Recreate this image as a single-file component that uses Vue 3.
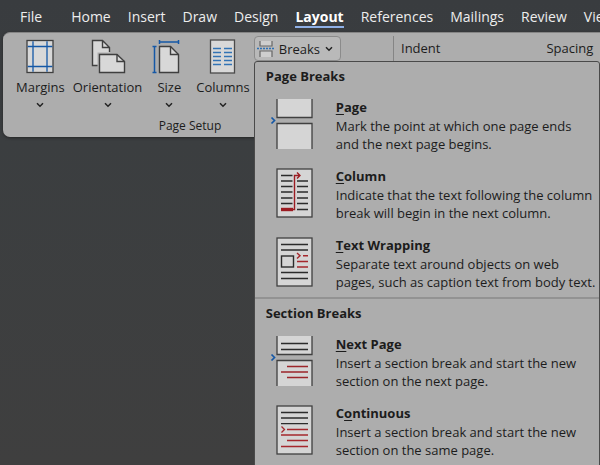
<script setup>
const tabs = ['File', 'Home', 'Insert', 'Draw', 'Design', 'Layout', 'References', 'Mailings', 'Review', 'View']
const active = 'Layout'
const tools = ['Margins', 'Orientation', 'Size', 'Columns']
const sections = [
  {
    title: 'Page Breaks',
    items: [
      { id: 'page', pre: '', key: 'P', rest: 'age', lines: ['Mark the point at which one page ends', 'and the next page begins.'] },
      { id: 'column', pre: '', key: 'C', rest: 'olumn', lines: ['Indicate that the text following the column', 'break will begin in the next column.'] },
      { id: 'wrap', pre: '', key: 'T', rest: 'ext Wrapping', lines: ['Separate text around objects on web', 'pages, such as caption text from body text.'] }
    ]
  },
  {
    title: 'Section Breaks',
    items: [
      { id: 'next', pre: '', key: 'N', rest: 'ext Page', lines: ['Insert a section break and start the new', 'section on the next page.'] },
      { id: 'continuous', pre: 'C', key: 'o', rest: 'ntinuous', lines: ['Insert a section break and start the new', 'section on the same page.'] }
    ]
  }
]
</script>

<template>
  <div class="app">
    <nav class="tabs">
      <a v-for="t in tabs" :key="t" href="#" class="tab" :class="{ active: t === active, file: t === 'File' }">{{ t }}</a>
    </nav>

    <main class="ribbon">
      <section class="group">
        <div class="row">
          <button v-for="t in tools" :key="t" type="button" class="tool" :class="t.toLowerCase()">
            <svg v-if="t === 'Margins'" class="tool-icon" width="38" height="36" viewBox="0 0 38 36">
              <rect x="6" y="2.500" width="26" height="32" fill="#d8d8d8" stroke="#3f3f3f" stroke-width="1.300" />
              <path d="M12 3.200V33.800M26 3.200V33.800M6.700 8.500H31.300M6.700 28.500H31.300" stroke="#1558a6" stroke-width="1.300" />
            </svg>
            <svg v-else-if="t === 'Orientation'" class="tool-icon" width="38" height="36" viewBox="0 0 38 36">
              <path d="M3.500 2.500H13.500L20.500 9.500V27.500H3.500Z" fill="#d8d8d8" />
              <path d="M9 27.500H3.500V2.500H13.500L20.500 9.500V14M13.500 2.500V9.500H20.500" fill="none" stroke="#3f3f3f" stroke-width="1.400" />
              <path d="M8.500 14.500H28L37 22V36H8.500Z" fill="#adadad" />
              <path d="M10.500 16.500H28L35.500 23.500V34.500H10.500Z" fill="#d8d8d8" stroke="#3f3f3f" stroke-width="1.400" />
              <path d="M28 16.500V23.500H35.500" fill="none" stroke="#3f3f3f" stroke-width="1.400" />
            </svg>
            <svg v-else-if="t === 'Size'" class="tool-icon" width="38" height="36" viewBox="0 0 38 36">
              <path d="M9.500 8.500H20.500L28.500 16.500V34.500H9.500Z" fill="#d8d8d8" stroke="#3f3f3f" stroke-width="1.400" />
              <path d="M20.500 8.500V16.500H28.500" fill="none" stroke="#3f3f3f" stroke-width="1.400" />
              <path d="M9 4H29M9.500 2V6M28.500 2V6M4.500 8.500V34.500M2.500 8.500H6.500M2.500 34.500H6.500" stroke="#1558a6" stroke-width="1.500" />
            </svg>
            <svg v-else class="tool-icon" width="38" height="36" viewBox="0 0 38 36">
              <rect x="6.500" y="2" width="24" height="33" fill="#d8d8d8" stroke="#4b4b4b" stroke-width="1.300" />
              <path d="M9 10.500H17M9 14.500H17M9 18.500H17M9 22.500H17M9 26.500H17M20 10.500H28M20 14.500H28M20 18.500H28M20 22.500H28M20 26.500H28" stroke="#3273b5" stroke-width="1.300" />
            </svg>
            <span>{{ t }}</span>
            <svg class="chevron" width="8" height="6" viewBox="0 0 8 6"><path d="M1 1.300L4 4.300L7 1.300" /></svg>
          </button>

          <div class="breaks-wrap">
            <button type="button" class="breaks" aria-haspopup="menu" aria-expanded="true">
              <svg width="20" height="20" viewBox="0 0 20 20">
                <path d="M4 2H16V7H4ZM4 12H16V18H4Z" fill="#cecece" />
                <path d="M4 2V7H16V2M4 18V12H16V18" fill="none" stroke="#666" stroke-width="1.200" />
                <path d="M1 9.500H19" stroke="#2d71b6" stroke-width="1.400" stroke-dasharray="2 1" />
              </svg>
              <span>Breaks</span>
              <svg class="chevron" width="8" height="6" viewBox="0 0 8 6"><path d="M1 1.300L4 4.300L7 1.300" /></svg>
            </button>

            <div class="menu" role="menu">
              <section v-for="s in sections" :key="s.title" class="menu-section">
                <h2>{{ s.title }}</h2>
                <button v-for="i in s.items" :key="i.id" type="button" role="menuitem" class="item">
                  <svg class="item-icon" width="44" height="50" viewBox="0 0 44 50">
                    <g v-if="i.id === 'page'">
                      <path d="M8 0H43V18.500H8ZM8 24.500H43V50H8Z" fill="#d5d5d5" />
                      <path d="M8 0V18.500H43V0M8 50V24.500H43V50" fill="none" stroke="#404040" stroke-width="1.300" />
                      <path d="M2.500 18.500L5.500 21.500L2.500 24.500" fill="none" stroke="#1558a6" stroke-width="1.700" />
                    </g>
                    <g v-else-if="i.id === 'next'">
                      <path d="M8 0H43V18.500H8ZM8 24.500H43V50H8Z" fill="#d5d5d5" />
                      <path d="M8 0V18.500H43V0M8 50V24.500H43V50" fill="none" stroke="#404040" stroke-width="1.300" />
                      <path d="M12 7.500H39M12 13.500H39" stroke="#2b2b2b" stroke-width="1.300" />
                      <path d="M18 30.500H39M12 36H39M18 41.500H39" stroke="#9c252a" stroke-width="1.300" />
                      <path d="M2.500 18.500L5.500 21.500L2.500 24.500" fill="none" stroke="#1558a6" stroke-width="1.700" />
                    </g>
                    <g v-else>
                      <rect x="8" y="1" width="35" height="48" fill="#d5d5d5" stroke="#404040" stroke-width="1.300" />
                      <g v-if="i.id === 'column'">
                        <path d="M12 7.500H23.500M12 13H23.500M12 18.500H23.500M12 24H23.500M12 30H23.500M12 35.500H23.500M28 13H39M28 18.500H39M28 24H39M28 30H39M28 35.500H39M28 41.500H39" stroke="#2b2b2b" stroke-width="1.300" />
                        <path d="M12 41.500H24" stroke="#9c1c22" stroke-width="3.400" />
                        <path d="M24 41.500H25.500V7.500H31M28 4.500L31 7.500L28 10.500" fill="none" stroke="#9c1c22" stroke-width="1.400" />
                      </g>
                      <g v-else-if="i.id === 'wrap'">
                        <path d="M12 7.500H39M12 13H39M12 35.500H39M12 41.500H39" stroke="#2b2b2b" stroke-width="1.300" />
                        <rect x="12.500" y="19" width="12" height="11" fill="none" stroke="#2b2b2b" stroke-width="1.400" />
                        <path d="M28 16L31 18.700L28 21.500M34 18.700H39M28 24.500H39M28 30H39" fill="none" stroke="#a5272c" stroke-width="1.400" />
                      </g>
                      <g v-else>
                        <path d="M12 7.500H39M12 13H39M12 18.700H39" stroke="#2b2b2b" stroke-width="1.300" />
                        <path d="M12.500 21.500L15.500 24.500L12.500 27.500M18 24.500H39M12 30H39M18 35.500H39M12 41.500H39" fill="none" stroke="#a5272c" stroke-width="1.300" />
                      </g>
                    </g>
                  </svg>
                  <span class="item-text">
                    <strong>{{ i.pre }}<u>{{ i.key }}</u>{{ i.rest }}</strong>
                    <span v-for="l in i.lines" :key="l" class="line">{{ l }}</span>
                  </span>
                </button>
              </section>
            </div>
          </div>
        </div>
        <div class="caption">Page Setup</div>
      </section>

      <section class="paragraph">
        <span>Indent</span>
        <span>Spacing</span>
      </section>
    </main>
  </div>
</template>

<style>
body {
  margin: 0;
  background: #3d3f3f;
}
</style>

<style scoped>
.app {
  min-height: 100vh;
  overflow: hidden;
  position: relative;
  background: linear-gradient(#393c3f 0, #3b3e40 140px, #3f3f3f 100%);
  font-family: "Open Sans", "Noto Sans", sans-serif;
  font-size: 13px;
  color: #1c1c1c;
}
button {
  font: inherit;
  color: inherit;
  background: none;
  border: 0;
  padding: 0;
  margin: 0;
}
.tabs {
  display: flex;
  gap: 17px;
  height: 32px;
  padding-left: 20px;
  font-size: 14px;
}
.tab {
  flex: none;
  height: 19px;
  margin-top: 7px;
  line-height: 20px;
  color: #ededed;
  text-decoration: none;
}
.file {
  margin-right: 12px;
}
.active {
  font-weight: 700;
  color: #fff;
  border-bottom: 2px solid #8fb0e6;
}
.ribbon {
  display: flex;
  height: 105px;
  margin-left: 3px;
  box-sizing: border-box;
  border-top: 1px solid #858585;
  border-radius: 7px 0 0 7px;
  background: #adadad;
  box-shadow: 0 1px 3px #252525;
}
.group {
  flex: none;
  width: 374px;
}
.row {
  display: flex;
  height: 84px;
  padding-left: 13px;
}
.tool {
  display: flex;
  flex-direction: column;
  align-items: center;
  padding-top: 5px;
  line-height: 20px;
}
.tool-icon {
  margin-bottom: 3px;
}
.tool .chevron {
  margin-top: 5px;
}
.chevron path {
  fill: none;
  stroke: #222;
  stroke-width: 1.5;
}
.orientation,
.size,
.columns {
  margin-left: 8px;
}
.breaks-wrap {
  position: relative;
  margin: 3px 0 0 4px;
}
.breaks {
  display: flex;
  align-items: center;
  gap: 3px;
  box-sizing: border-box;
  width: 87px;
  height: 25px;
  padding-left: 1px;
  border: 1px solid #8b8b8b;
  border-radius: 4px;
  background: #b9b9b9;
}
.breaks .chevron {
  margin-left: 2px;
}
.menu {
  position: absolute;
  z-index: 2;
  top: 25px;
  left: 0;
  width: 344px;
  padding-bottom: 12px;
  border: 1px solid #4a4a4a;
  border-radius: 3px;
  background: #adadad;
}
.menu-section + .menu-section {
  border-top: 2px solid #929292;
}
h2 {
  margin: 0;
  padding-left: 11px;
  font-size: 13px;
  line-height: 28px;
}
.item {
  display: flex;
  width: 100%;
  height: 69px;
  padding: 9px 0 0 14px;
  text-align: left;
}
.item-icon {
  flex: none;
  margin-right: 23px;
}
.item-text {
  display: flex;
  flex-direction: column;
  margin-top: -2px;
  line-height: 18px;
}
.item-text strong {
  line-height: 20px;
}
u {
  text-underline-offset: 2px;
}
.line {
  white-space: nowrap;
}
.caption {
  font-size: 12px;
  line-height: 18px;
  text-align: center;
}
.paragraph {
  display: flex;
  gap: 106px;
  height: 60px;
  margin: 3px 0 0 16px;
  padding-left: 7px;
  border-left: 1px solid #858585;
  line-height: 25px;
}
</style>
